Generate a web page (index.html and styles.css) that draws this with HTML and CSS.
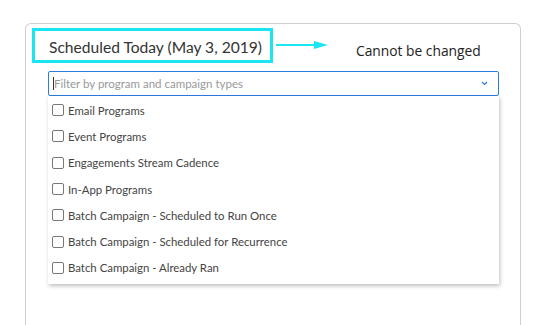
FILE: index.html
```html
<!DOCTYPE html>
<html lang="en">
<head>
    <meta charset="UTF-8">
    <title>Scheduled Today</title>
    <link rel="stylesheet" href="styles.css">
</head>
<body>

<div class="card">
    <div class="head">
        <div class="title-box"><h2>Scheduled Today (May 3, 2019)</h2></div>
        <svg class="arrow" width="54" height="10" viewBox="0 0 54 10">
            <line x1="0" y1="5" x2="42" y2="5" stroke="#19e6f0" stroke-width="2"/>
            <polygon points="38,1 52,5 38,9" fill="#19e6f0"/>
        </svg>
        <span class="note">Cannot be changed</span>
    </div>

    <div class="filter">
        <div class="filter-input">
            <span class="caret"></span>
            <span class="placeholder">Filter by program and campaign types</span>
            <svg class="chev" width="7" height="5" viewBox="0 0 7 5"><path d="M1 1 L3.5 3.5 L6 1" fill="none" stroke="#2a7de1" stroke-width="1.2"/></svg>
        </div>
        <ul class="options">
            <li><span class="box"></span>Email Programs</li>
            <li><span class="box"></span>Event Programs</li>
            <li><span class="box"></span>Engagements Stream Cadence</li>
            <li><span class="box"></span>In-App Programs</li>
            <li><span class="box"></span>Batch Campaign - Scheduled to Run Once</li>
            <li><span class="box"></span>Batch Campaign - Scheduled for Recurrence</li>
            <li><span class="box"></span>Batch Campaign - Already Ran</li>
        </ul>
    </div>
</div>

</body>
</html>
```

FILE: styles.css
```css
body {
    margin: 0;
    background: #fff;
    font-family: Lato, "Liberation Sans", sans-serif;
    color: #333;
}
.card {
    margin: 23px 0 0 25px;
    width: 494px;
    height: 301px;
    border: 1px solid #cfcfcf;
    border-bottom: none;
    border-radius: 6px 6px 0 0;
}
.head {
    display: flex;
    align-items: flex-start;
    padding: 4px 0 0 6px;
}
.title-box {
    width: 235px;
    height: 29px;
    border: 3px solid #19e6f0;
    display: flex;
    align-items: center;
}
.title-box h2 {
    margin: 0 0 0 14px;
    font-size: 15.6px;
    font-weight: 400;
    white-space: nowrap;
    color: #333;
    padding-top: 2px;
}
.arrow {
    margin: 12px 0 0 3px;
}
.note {
    margin: 13px 0 0 26px;
    font-family: "Open Sans", "DejaVu Sans", sans-serif;
    font-size: 13.8px;
    color: #222;
}
.filter {
    margin: 8px 0 0 22px;
    width: 451px;
}
.filter-input {
    height: 23px;
    border: 1px solid #2a7de1;
    border-radius: 2px;
    display: flex;
    align-items: center;
    padding: 0 10px 0 4px;
}
.caret {
    width: 1px;
    height: 13px;
    background: #333;
}
.placeholder {
    flex: 1;
    font-size: 11.5px;
    color: #999;
}
.options {
    list-style: none;
    margin: 0;
    padding: 1px 0 3px;
    background: #fff;
    box-shadow: 1px 2px 4px rgba(0, 0, 0, 0.25);
}
.options li {
    height: 26.3px;
    display: flex;
    align-items: center;
    padding-left: 4px;
    font-size: 11.4px;
    color: #444;
}
.box {
    width: 10px;
    height: 10px;
    border: 1px solid #777;
    border-radius: 2px;
    margin-right: 4px;
}
```
